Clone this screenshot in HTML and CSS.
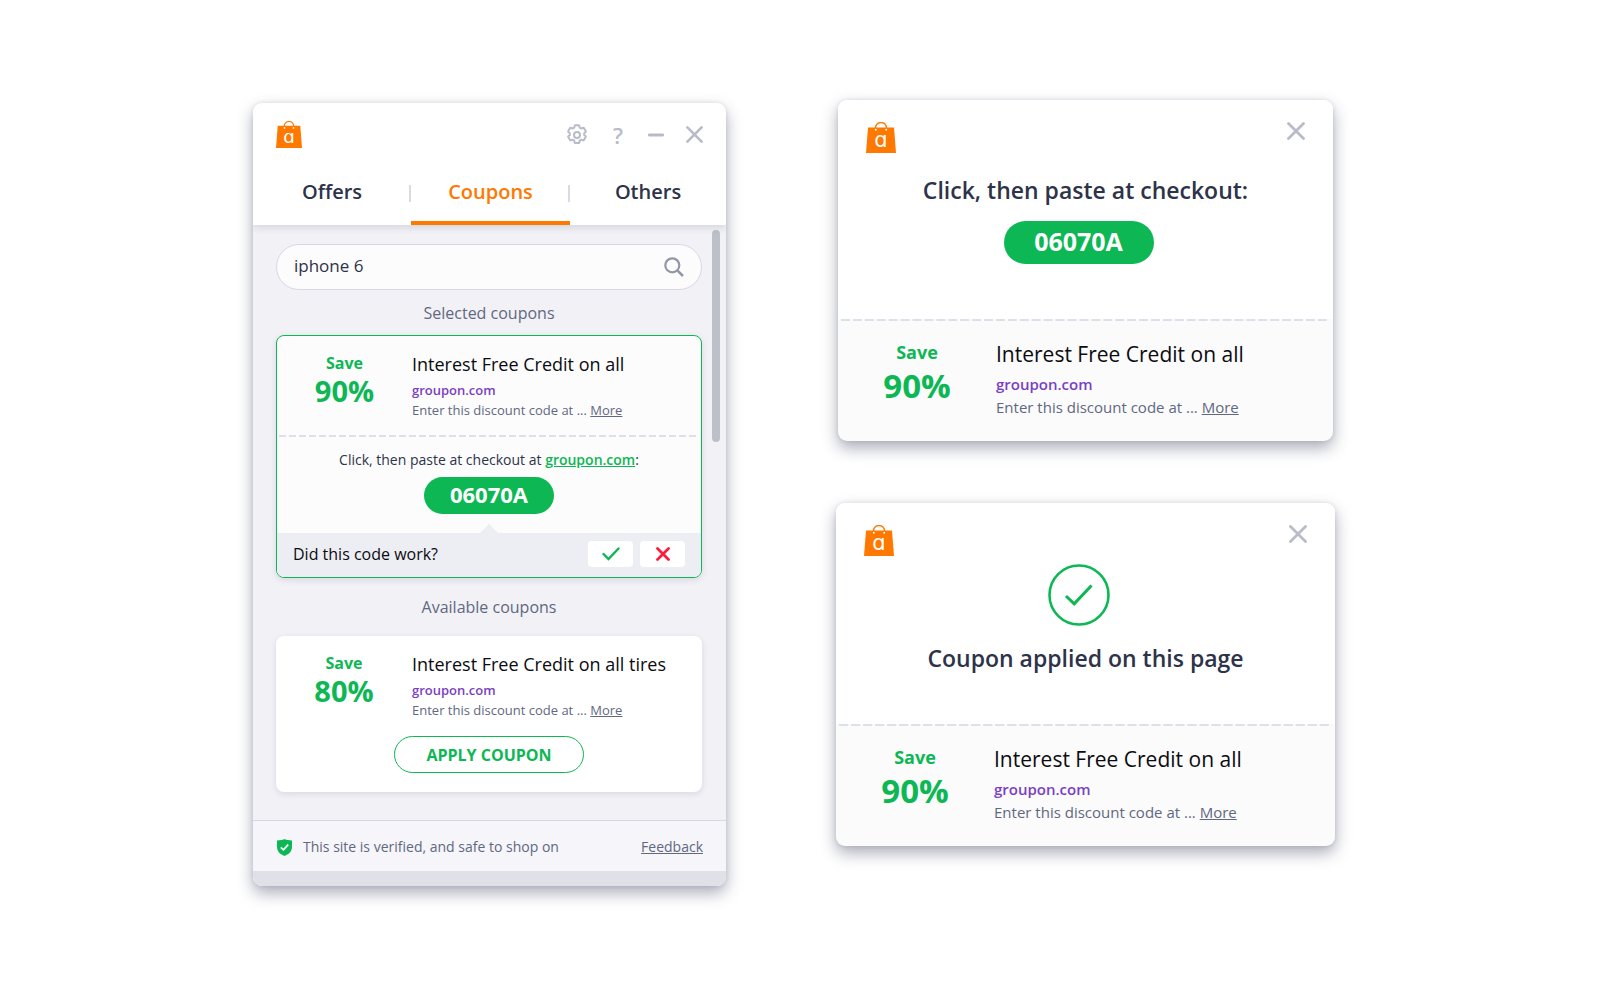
FILE: index.html
```html
<!DOCTYPE html>
<html lang="en">
	<head>
		<meta charset="utf-8">
		<title>Shopping assistant</title>
		<link rel="stylesheet" href="styles.css">
	</head>
	<body>
		<!-- shared icons -->
		<svg class="sprite" aria-hidden="true">
			<symbol id="bag" viewBox="0 0 30 31">
				<path d="M2 5.5h26L30 31H0z" fill="#ff7800"/>
				<path d="M9.5 7V6a5.5 5.5 0 0 1 11 0v1" fill="none" stroke="#ff7800" stroke-width="1.4"/>
				<circle cx="9.8" cy="7.8" r="1" fill="#fff"/>
				<circle cx="20.2" cy="7.8" r="1" fill="#fff"/>
				<text x="15" y="25" class="bag-letter">ɑ</text>
			</symbol>
			<symbol id="cross" viewBox="0 0 18 18">
				<path d="M1.5 1.5l15 15M16.5 1.5l-15 15" fill="none" stroke="currentColor" stroke-width="2.8" stroke-linecap="round"/>
			</symbol>
		</svg>

		<main class="page">
			<section class="panel">
				<header class="panel-head">
					<div class="panel-bar">
						<svg class="logo"><use href="#bag"/></svg>
						<div class="tools">
							<button class="tool" aria-label="Settings">
								<svg width="22" height="22" viewBox="0 0 22 22" fill="none" stroke="currentColor" stroke-width="2" stroke-linejoin="round">
									<path d="M9.300 1.200h3.400q.6 0 .7.700l.3 1.700 1.600.9 1.700-.7q.6-.2.900.3l1.800 3q.3.600-.2 1l-1.300 1.100v1.800l1.300 1.100q.5.400.2 1l-1.800 3q-.3.500-.9.300l-1.700-.7-1.600.9-.3 1.700q-.1.700-.7.700H9.300q-.6 0-.7-.7l-.3-1.700-1.600-.9-1.700.7q-.6.200-.9-.3l-1.800-3q-.3-.6.2-1l1.300-1.100V9.200L2.500 8.100q-.5-.4-.2-1l1.800-3q.3-.5.9-.3l1.700.7 1.600-.9.3-1.700q.1-.7.7-.7z"/>
									<circle cx="11" cy="11" r="3"/>
								</svg>
							</button>
							<button class="tool tool-help" aria-label="Help">?</button>
							<button class="tool" aria-label="Minimize">
								<svg width="16" height="16" viewBox="0 0 16 16"><path d="M1.300 8h13.400" stroke="currentColor" stroke-width="2.800" stroke-linecap="round"/></svg>
							</button>
							<button class="tool" aria-label="Close"><svg width="17" height="17"><use href="#cross"/></svg></button>
						</div>
					</div>
					<nav class="tabs">
						<a class="tab" href="#offers">Offers</a>
						<a class="tab active" href="#coupons">Coupons</a>
						<a class="tab" href="#others">Others</a>
					</nav>
				</header>

				<div class="panel-body">
					<div class="content">
						<form class="search">
							<input class="search-input" type="text" value="iphone 6" aria-label="Search coupons">
							<button class="tool search-btn" type="button" aria-label="Search">
								<svg width="20" height="20" viewBox="0 0 20 20" fill="none" stroke="currentColor" stroke-width="2.200">
									<circle cx="8.300" cy="8.300" r="7"/>
									<path d="M13.300 13.300l5.700 5.700" stroke-width="2.600"/>
								</svg>
							</button>
						</form>

						<h2 class="group-title">Selected coupons</h2>
						<article class="card selected">
							<div class="coupon">
								<div class="save">Save <strong class="percent">90%</strong></div>
								<div>
									<h3 class="coupon-title">Interest Free Credit on all</h3>
									<a class="store" href="#groupon">groupon.com</a>
									<p class="desc">Enter this discount code at ... <a href="#more">More</a></p>
								</div>
							</div>
							<div class="dashes"></div>
							<div class="code-box">
								<p class="hint">Click, then paste at checkout at <a href="#groupon">groupon.com</a>:</p>
								<button class="code">06070A</button>
							</div>
							<div class="feedback">
								<span>Did this code work?</span>
								<div class="answers">
									<button class="answer yes" aria-label="Yes">
										<svg width="18" height="14" viewBox="0 0 18 14"><path d="M1.500 7l5 5L16.500 1.500" fill="none" stroke="currentColor" stroke-width="2.400" stroke-linecap="round"/></svg>
									</button>
									<button class="answer no" aria-label="No">
										<svg width="14" height="14" viewBox="0 0 14 14"><path d="M1.500 1.500l11 11M12.500 1.500l-11 11" stroke="currentColor" stroke-width="2.800" stroke-linecap="round"/></svg>
									</button>
								</div>
							</div>
						</article>

						<h2 class="group-title available">Available coupons</h2>
						<article class="card">
							<div class="coupon">
								<div class="save">Save <strong class="percent">80%</strong></div>
								<div>
									<h3 class="coupon-title">Interest Free Credit on all tires</h3>
									<a class="store" href="#groupon">groupon.com</a>
									<p class="desc">Enter this discount code at ... <a href="#more">More</a></p>
								</div>
							</div>
							<button class="apply">APPLY COUPON</button>
						</article>
					</div>
					<div class="scroll"></div>
				</div>

				<footer class="panel-foot">
					<svg width="15" height="17" viewBox="0 0 15 17">
						<path d="M7.500 0C9.500 1 12 1.300 15 1.500V8c0 4.500-3.500 7.500-7.500 9C3.500 15.500 0 12.500 0 8V1.500C3 1.300 5.500 1 7.500 0z" fill="#0cb754"/>
						<path d="M3.800 8.400l2.600 2.400 4.800-5.200" fill="none" stroke="#fff" stroke-width="1.800"/>
					</svg>
					<span>This site is verified, and safe to shop on</span>
					<a class="feedback-link" href="#feedback">Feedback</a>
				</footer>
			</section>

			<div class="popups">
				<section class="popup narrow">
					<div class="popup-top">
						<div class="popup-bar">
							<svg class="logo"><use href="#bag"/></svg>
							<button class="tool" aria-label="Close"><svg width="18" height="18"><use href="#cross"/></svg></button>
						</div>
						<h1 class="popup-title">Click, then paste at checkout:</h1>
						<button class="code mark">06070A</button>
					</div>
					<div class="dashes"></div>
					<div class="coupon">
						<div class="save">Save <strong class="percent">90%</strong></div>
						<div>
							<h3 class="coupon-title">Interest Free Credit on all</h3>
							<a class="store" href="#groupon">groupon.com</a>
							<p class="desc">Enter this discount code at ... <a href="#more">More</a></p>
						</div>
					</div>
				</section>

				<section class="popup">
					<div class="popup-top applied">
						<div class="popup-bar">
							<svg class="logo"><use href="#bag"/></svg>
							<button class="tool" aria-label="Close"><svg width="18" height="18"><use href="#cross"/></svg></button>
						</div>
						<svg class="mark" width="62" height="62" viewBox="0 0 62 62" fill="none" stroke="#0cb754">
							<circle cx="31" cy="31" r="29.500" stroke-width="2.600"/>
							<path d="M18 32l8.200 7.800L43.500 21.500" stroke-width="3"/>
						</svg>
						<h1 class="popup-title">Coupon applied on this page</h1>
					</div>
					<div class="dashes"></div>
					<div class="coupon">
						<div class="save">Save <strong class="percent">90%</strong></div>
						<div>
							<h3 class="coupon-title">Interest Free Credit on all</h3>
							<a class="store" href="#groupon">groupon.com</a>
							<p class="desc">Enter this discount code at ... <a href="#more">More</a></p>
						</div>
					</div>
				</section>
			</div>
		</main>
	</body>
</html>
```
FILE: styles.css
```css
* { box-sizing: border-box; }
body {
	margin: 0;
	background: white;
	color: #2d3349;
	font-family: "Open Sans", "Noto Sans", sans-serif;
}
h1, h2, h3, p { margin: 0; }
button { padding: 0; border: 0; background: none; font-family: inherit; cursor: pointer; }
svg { display: block; }
.sprite { display: none; }
.bag-letter {
	fill: white;
	font-family: "DejaVu Sans", sans-serif;
	font-size: 21px;
	text-anchor: middle;
}

.page {
	display: grid;
	grid-template-columns: 473fr 499fr;
	column-gap: 110px;
	align-items: start;
	padding: 100px 264px 100px 253px;
}
.panel, .popup {
	border-radius: 9px;
	overflow: hidden;
	background: white;
	box-shadow: 0 7px 16px rgba(45, 51, 80, .4), 0 0 4px rgba(45, 51, 80, .12);
}

/* main panel */
.panel { margin-top: 3px; }
.panel-head { position: relative; background: white; box-shadow: 0 2px 8px rgba(45, 51, 80, .16); }
.panel-bar { display: flex; justify-content: space-between; align-items: center; padding: 18px 23px 0; }
.logo { width: 26px; height: 27px; }
.tools { display: flex; align-items: center; gap: 22px; }
.tool { color: #b8bcc8; }
.tool-help { width: 16px; font-size: 22px; line-height: 24px; font-weight: 600; }
.tabs { display: grid; grid-template-columns: 158fr 159fr 156fr; margin-top: 24px; }
.tab {
	padding: 7px 0 16px;
	border-bottom: 4px solid transparent;
	color: #2d3349;
	font-size: 20px;
	line-height: 26px;
	font-weight: 600;
	text-align: center;
	text-decoration: none;
	background: linear-gradient(#d9dbe4, #d9dbe4) right 13px / 2px 17px no-repeat;
}
.tab:last-child { background: none; }
.tab.active { color: #ff7800; border-color: #ff7800; }

.panel-body { display: flex; background: #f1f1f6; }
.content { flex: 1; padding: 19px 10px 28px 23px; }
.scroll { width: 8px; height: 212px; margin: 5px 6px 0 0; border-radius: 4px; background: #bcc0c9; }
.search {
	display: flex;
	align-items: center;
	height: 46px;
	padding: 0 17px;
	border: 1px solid #d5d8e4;
	border-radius: 23px;
	background: #fcfcfc;
}
.search-input {
	flex: 1;
	min-width: 0;
	padding: 0 0 3px;
	border: 0;
	outline: 0;
	background: none;
	color: #2d3349;
	font: 17px "Open Sans", "Noto Sans", sans-serif;
}
.search-btn { color: #9297a8; }
.group-title { margin: 11px 0 10px; color: #616880; font-size: 16px; line-height: 24px; font-weight: 400; text-align: center; }
.group-title.available { margin: 17px 0; }

.card { border-radius: 8px; overflow: hidden; background: white; box-shadow: 0 2px 6px rgba(45, 51, 80, .12); }
.card.selected { border: 1px solid #0cb754; background: #fcfcfc; }
.coupon { display: grid; grid-template-columns: 136px 1fr; padding: 15px 0; }
.selected .coupon { grid-template-columns: 135px 1fr; }
.save { padding-top: 2px; color: #0cb754; font-size: 16px; line-height: 20px; font-weight: 700; text-align: center; }
.percent { display: block; font-size: 29px; line-height: 36px; font-weight: 700; }
.coupon-title { margin-bottom: 4px; color: #0b0b10; font-size: 18px; line-height: 26px; font-weight: 400; }
.store { display: block; color: #7a3fc4; font-size: 13px; line-height: 19px; font-weight: 600; text-decoration: none; }
.desc { color: #616880; font-size: 13px; line-height: 20px; }
.desc a { color: inherit; }
.dashes {
	height: 2px;
	margin: 0 2px;
	background: linear-gradient(90deg, #dde0ea 75%, transparent 75%) 0 0 / 10px 2px round;
}
.code-box { padding: 12px 0 19px; text-align: center; }
.hint { margin-bottom: 6px; font-size: 14px; line-height: 22px; }
.hint a { color: #0cb754; font-weight: 600; }
.code {
	width: 130px;
	height: 37px;
	padding-bottom: 3px;
	border-radius: 22px;
	background: #0cb754;
	color: white;
	font-size: 22px;
	font-weight: 700;
}
.feedback {
	position: relative;
	display: flex;
	justify-content: space-between;
	align-items: center;
	height: 44px;
	padding: 0 16px 3px;
	background: #edeef4;
	color: #0b0b10;
	font-size: 16px;
}
.feedback::before {
	content: "";
	position: absolute;
	left: 50%;
	bottom: 100%;
	border: 9px solid transparent;
	border-top: 0;
	border-bottom-color: #edeef4;
	transform: translateX(-50%);
}
.answers { display: flex; gap: 7px; }
.answer { display: flex; justify-content: center; align-items: center; width: 45px; height: 26px; border-radius: 4px; background: white; }
.yes { color: #0cb754; }
.no { color: #fb1e3c; }
.apply {
	display: block;
	width: 190px;
	height: 37px;
	margin: 1px auto 19px;
	border: 1px solid #0cb754;
	border-radius: 19px;
	color: #0cb754;
	font-size: 16px;
	font-weight: 700;
}

.panel-foot {
	display: flex;
	align-items: center;
	gap: 11px;
	padding: 14px 23px 12px 24px;
	border-top: 1px solid #d5d8e4;
	border-bottom: 15px solid #dfe0e8;
	background: #f5f5fa;
	color: #616880;
	font-size: 14px;
	line-height: 24px;
}
.feedback-link { margin-left: auto; color: inherit; }

/* checkout popups */
.popups { display: grid; gap: 62px; }
.popup { background: #fbfbfc; }
.popup.narrow { margin: 0 2px; }
.popup-top { display: flex; flex-direction: column; align-items: center; min-height: 219px; background: white; }
.popup-top.applied { min-height: 221px; }
.popup-bar { display: flex; justify-content: space-between; align-items: flex-start; width: 100%; padding: 22px 28px 0; }
.popup .logo { width: 30px; height: 31px; }
.popup-title { margin: 21px 0 15px; font-size: 23px; line-height: 32px; font-weight: 600; }
.mark { margin-right: 14px; }
.applied .mark { margin-top: 8px; }
.applied .popup-title { margin-top: 16px; }
.popup .code { width: 150px; height: 43px; font-size: 25px; }
.popup .dashes { margin: 0 3px; background-size: 12px 2px; }
.popup .coupon { grid-template-columns: 158px 1fr; padding: 18px 0 22px; }
.popup .save { font-size: 18px; line-height: 22px; }
.popup .percent { font-size: 33px; line-height: 46px; }
.popup .coupon-title { font-size: 21px; line-height: 30px; }
.popup .store { font-size: 15px; line-height: 23px; }
.popup .desc { font-size: 15px; line-height: 23px; }
```
